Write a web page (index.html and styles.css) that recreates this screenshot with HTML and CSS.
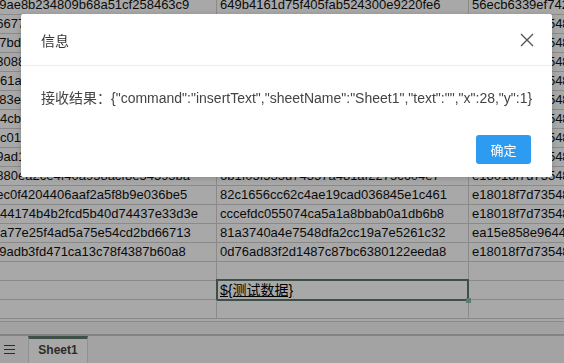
FILE: index.html
```html
<!DOCTYPE html>
<html lang="zh">
<head>
<meta charset="utf-8">
<title>信息</title>
<link rel="stylesheet" href="styles.css">
</head>
<body>
<div class="sheet">
  <div class="grid">
    <div class="row"><div class="cell a">1b2c9ae8b234809b68a51cf258463c9</div><div class="cell b">649b4161d75f405fab524300e9220fe6</div><div class="cell c">56ecb6339ef742a8b1c0d5e6f7a8b9c0</div></div>
    <div class="row"><div class="cell a">8d2f6677e1c2a9b04f3d8e5a7c61b2d9</div><div class="cell b">5d0c2a7e9b3f41c68a2e7d5b9c0f1a34</div><div class="cell c">e18018f7d73548a6b2c1d0e9f8a7b6c5</div></div>
    <div class="row"><div class="cell a">a1c07bd45e2f9c1a8b3d6e0f4a7c2b91</div><div class="cell b">3e7a1c9d5b2f48e06a4c8d1b7e9f2a05</div><div class="cell c">e18018f7d73548a6b2c1d0e9f8a7b6c5</div></div>
    <div class="row"><div class="cell a">f4e930887c1d2b6a9e5f0c3d8a1b7e42</div><div class="cell b">9c2e5a7b1d3f46a08e2c6b9d4f1a7e35</div><div class="cell c">e18018f7d73548a6b2c1d0e9f8a7b6c5</div></div>
    <div class="row"><div class="cell a">2b8d61af3c9e5d0b7a1f4e2c8d6b9a03</div><div class="cell b">7a4c1e9b2d5f48c06e3a9d1b5c7f2e84</div><div class="cell c">e18018f7d73548a6b2c1d0e9f8a7b6c5</div></div>
    <div class="row"><div class="cell a">c7a383ee1f5b9d2c6a0e4b8d3f7c1a96</div><div class="cell b">1d6b3f8a5c2e47d09b4e7a2c6d1f9b53</div><div class="cell c">e18018f7d73548a6b2c1d0e9f8a7b6c5</div></div>
    <div class="row"><div class="cell a">e5d44cb92a7f1e3d8c5b0a6f2e9d4c17</div><div class="cell b">4f9a2d6c8b1e43f05a7d2c9b4e6a1f28</div><div class="cell c">e18018f7d73548a6b2c1d0e9f8a7b6c5</div></div>
    <div class="row"><div class="cell a">9b1ec0186d3a7f2e5b9c1d4a8e6f0b72</div><div class="cell b">8e3c7a1f5d9b42e06c8a3f1d7b5e9c61</div><div class="cell c">e18018f7d73548a6b2c1d0e9f8a7b6c5</div></div>
    <div class="row"><div class="cell a">4f6a9ad17b2e5c8d0f3a6b9e1c4d7a25</div><div class="cell b">2a8d5c1e9f3b47a06d2c8e5b1f9a3d76</div><div class="cell c">e18018f7d73548a6b2c1d0e9f8a7b6c5</div></div>
    <div class="row"><div class="cell a">d2f7880ea2ce4f40a958acf8e54595ba</div><div class="cell b">6b1f05f535d74357a481af2275c604e7</div><div class="cell c">e18018f7d73548a6b2c1d0e9f8a7b6c5</div></div>
    <div class="row"><div class="cell a">9f3bec0f4204406aaf2a5f8b9e036be5</div><div class="cell b">82c1656cc62c4ae19cad036845e1c461</div><div class="cell c">e18018f7d73548a6b2c1d0e9f8a7b6c5</div></div>
    <div class="row"><div class="cell a">7e2a44174b4b2fcd5b40d74437e33d3e</div><div class="cell b">cccefdc055074ca5a1a8bbab0a1db6b8</div><div class="cell c">e18018f7d73548a6b2c1d0e9f8a7b6c5</div></div>
    <div class="row"><div class="cell a">b5d1a77e25f4ad5a75e54cd2bd66713</div><div class="cell b">81a3740a4e7548dfa2cc19a7e5261c32</div><div class="cell c">ea15e858e96448c2b7a1d0e9f8c6b5a4</div></div>
    <div class="row"><div class="cell a">3c8e9adb3fd471ca13c78f4387b60a8</div><div class="cell b">0d76ad83f2d1487c87bc6380122eeda8</div><div class="cell c">e18018f7d73548a6b2c1d0e9f8a7b6c5</div></div>
    <div class="row"><div class="cell a"></div><div class="cell b"></div><div class="cell c"></div></div>
    <div class="row"><div class="cell a"></div><div class="cell b sel"><span class="tpl">${测试数据}</span></div><div class="cell c"></div></div>
    <div class="row"><div class="cell a"></div><div class="cell b"></div><div class="cell c"></div></div>
  </div>
  <div class="hbar"></div>
  <div class="tabs">
    <span class="menu"><svg width="11" height="9" viewBox="0 0 11 9"><path d="M0 0.5H11M0 4.5H11M0 8.5H11" stroke="#444" stroke-width="1"/></svg></span>
    <div class="tab">Sheet1</div>
  </div>
</div>
<div class="mask"></div>
<div class="dialog">
  <div class="dlg-head">
    <span class="dlg-title">信息</span>
    <span class="dlg-close"><svg width="14" height="14" viewBox="0 0 14 14"><path d="M1 1L13 13M13 1L1 13" stroke="#555" stroke-width="1.4"/></svg></span>
  </div>
  <div class="dlg-body">接收结果：{"command":"insertText","sheetName":"Sheet1","text":"","x":28,"y":1}</div>
  <div class="dlg-foot"><button class="btn">确定</button></div>
</div>
</body>
</html>
```
FILE: styles.css
```css
html, body {
  margin: 0;
  padding: 0;
  width: 564px;
  height: 363px;
  overflow: hidden;
  background: #fff;
  font-family: "Liberation Sans", "Noto Sans CJK SC", sans-serif;
}
.sheet {
  display: flex;
  flex-direction: column;
  width: 564px;
  height: 363px;
  overflow: hidden;
}
.grid {
  display: flex;
  flex-direction: column;
  margin-top: -4px;
  margin-left: -32px;
}
.row {
  display: flex;
  height: 19px;
  box-sizing: border-box;
  border-bottom: 1px solid #d2d2d2;
}
.cell {
  flex: none;
  box-sizing: border-box;
  height: 18px;
  line-height: 18px;
  padding: 0 3px;
  font-size: 13px;
  color: #111;
  white-space: nowrap;
  overflow: hidden;
  border-right: 1px solid #d2d2d2;
  position: relative;
}
.cell.a { width: 249px; }
.cell.b { width: 252px; }
.cell.c { width: 200px; }
.cell.sel { overflow: visible; }
.cell.sel::after {
  content: "";
  position: absolute;
  left: -1px;
  top: -2px;
  right: -1px;
  bottom: -2px;
  border: 2px solid #5c7a6d;
}
.cell.sel::before {
  content: "";
  position: absolute;
  right: -3px;
  bottom: -4px;
  width: 5px;
  height: 5px;
  background: #5c7a6d;
  z-index: 1;
}
.tpl {
  font-size: 14px;
  text-decoration: underline;
  color: #000;
}
.hbar {
  margin-top: 2px;
  height: 12px;
  background: #f6f6f6;
  border-top: 1px solid #d4d4d4;
  border-bottom: 2px solid #c6c6c6;
}
.tabs {
  display: flex;
  align-items: stretch;
  height: 27px;
  background: #f7f7f7;
  padding-left: 4px;
}
.menu {
  display: flex;
  align-items: center;
  width: 24px;
}
.tab {
  box-sizing: border-box;
  width: 60px;
  border-top: 3px solid #5e7a6c;
  border-left: 1px solid #dcdcdc;
  border-right: 1px solid #dcdcdc;
  background: #ffffff;
  font-size: 12px;
  font-weight: bold;
  color: #444;
  text-align: center;
  line-height: 22px;
}
.mask {
  position: fixed;
  inset: 0;
  background: rgba(0, 0, 0, 0.34);
}
.dialog {
  position: fixed;
  left: 21px;
  top: 14px;
  width: 531px;
  background: #fff;
  border-radius: 2px;
  box-shadow: 0 1px 6px rgba(0, 0, 0, 0.2);
  display: flex;
  flex-direction: column;
}
.dlg-head {
  display: flex;
  align-items: center;
  justify-content: space-between;
  height: 51px;
  padding: 0 18px 0 20px;
  border-bottom: 1px solid #ececec;
}
.dlg-title {
  font-size: 14px;
  color: #333;
}
.dlg-close {
  display: flex;
}
.dlg-body {
  padding: 22px 20px 0;
  font-size: 14px;
  line-height: 20px;
  color: #444;
  white-space: nowrap;
}
.dlg-foot {
  display: flex;
  justify-content: flex-end;
  padding: 27px 21px 13px;
}
.btn {
  width: 55px;
  height: 29px;
  border: none;
  border-radius: 3px;
  background: #2d9cf0;
  color: #fff;
  font-family: "Liberation Sans", "Noto Sans CJK SC", sans-serif;
  font-size: 13px;
  padding: 0;
}
```
